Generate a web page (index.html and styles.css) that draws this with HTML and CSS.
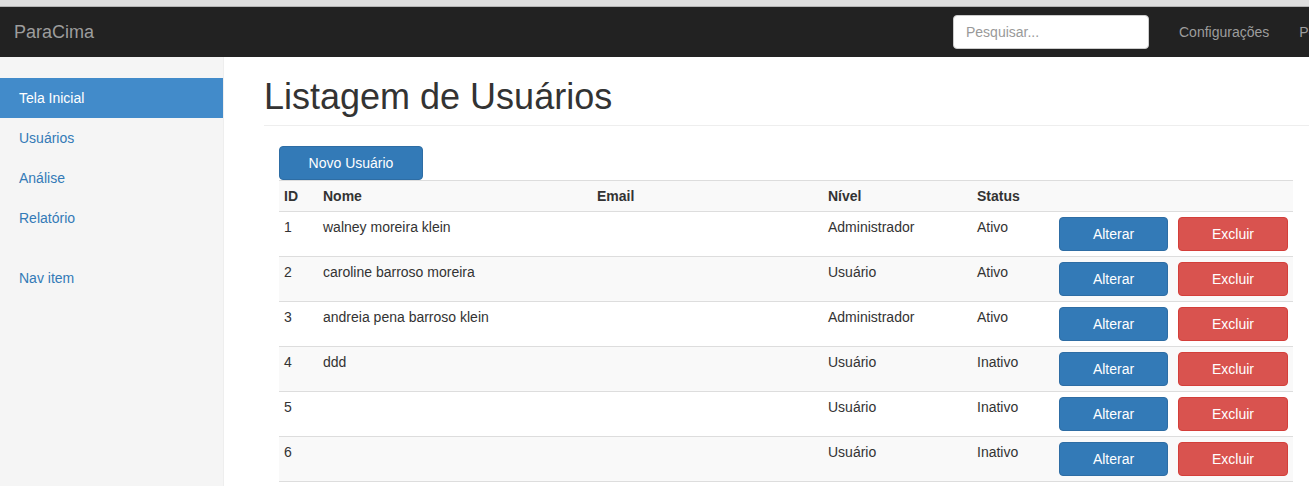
FILE: index.html
```html
<!DOCTYPE html>
<html lang="pt-BR">
<head>
<meta charset="utf-8">
<title>ParaCima - Listagem de Usuários</title>
<link rel="stylesheet" href="styles.css">
</head>
<body>
<div class="topstrip"></div>
<nav class="navbar">
  <a class="brand" href="#">ParaCima</a>
  <div class="nav-right">
    <form class="search-form"><input class="search" type="text" placeholder="Pesquisar..."></form>
    <a class="nav-link" href="#">Configurações</a>
    <a class="nav-link" href="#">Perfil</a>
  </div>
</nav>
<div class="layout">
  <aside class="sidebar">
    <ul class="side-nav">
      <li><a class="active" href="#">Tela Inicial</a></li>
      <li><a href="#">Usuários</a></li>
      <li><a href="#">Análise</a></li>
      <li><a href="#">Relatório</a></li>
    </ul>
    <ul class="side-nav">
      <li><a href="#">Nav item</a></li>
    </ul>
  </aside>
  <main class="main">
    <h1 class="page-header">Listagem de Usuários</h1>
    <div class="table-wrap">
      <button class="btn btn-primary btn-new" type="button">Novo Usuário</button>
      <table class="table">
        <colgroup>
          <col class="c-id"><col class="c-nome"><col class="c-email"><col class="c-nivel"><col class="c-status"><col class="c-alt"><col class="c-exc">
        </colgroup>
        <tbody>
          <tr><th>ID</th><th>Nome</th><th>Email</th><th>Nível</th><th>Status</th><th></th><th></th></tr>
          <tr><td>1</td><td>walney moreira klein</td><td></td><td>Administrador</td><td>Ativo</td><td><button class="btn btn-primary btn-alt" type="button">Alterar</button></td><td><button class="btn btn-danger btn-exc" type="button">Excluir</button></td></tr>
          <tr><td>2</td><td>caroline barroso moreira</td><td></td><td>Usuário</td><td>Ativo</td><td><button class="btn btn-primary btn-alt" type="button">Alterar</button></td><td><button class="btn btn-danger btn-exc" type="button">Excluir</button></td></tr>
          <tr><td>3</td><td>andreia pena barroso klein</td><td></td><td>Administrador</td><td>Ativo</td><td><button class="btn btn-primary btn-alt" type="button">Alterar</button></td><td><button class="btn btn-danger btn-exc" type="button">Excluir</button></td></tr>
          <tr><td>4</td><td>ddd</td><td></td><td>Usuário</td><td>Inativo</td><td><button class="btn btn-primary btn-alt" type="button">Alterar</button></td><td><button class="btn btn-danger btn-exc" type="button">Excluir</button></td></tr>
          <tr><td>5</td><td></td><td></td><td>Usuário</td><td>Inativo</td><td><button class="btn btn-primary btn-alt" type="button">Alterar</button></td><td><button class="btn btn-danger btn-exc" type="button">Excluir</button></td></tr>
          <tr><td>6</td><td></td><td></td><td>Usuário</td><td>Inativo</td><td><button class="btn btn-primary btn-alt" type="button">Alterar</button></td><td><button class="btn btn-danger btn-exc" type="button">Excluir</button></td></tr>
        </tbody>
      </table>
    </div>
  </main>
</div>
</body>
</html>
```
FILE: styles.css
```css
* { box-sizing: border-box; }
html, body {
  margin: 0;
  padding: 0;
  overflow: hidden;
}
body {
  font-family: "Liberation Sans", Arial, Helvetica, sans-serif;
  font-size: 14px;
  line-height: 20px;
  color: #333;
  background: #fff;
}
a { text-decoration: none; }

.topstrip {
  height: 7px;
  background: #dedede;
  border-bottom: 1px solid #b4b4b4;
}

.navbar {
  display: flex;
  height: 50px;
  background: #222;
}
.brand {
  flex: 1 1 auto;
  padding: 15px 15px 15px 14px;
  font-size: 18px;
  line-height: 20px;
  color: #9d9d9d;
}
.nav-right {
  flex: 0 0 356px;
  display: flex;
  white-space: nowrap;
  overflow: hidden;
}
.search-form {
  margin: 0;
  padding: 8px 0;
}
.search {
  display: block;
  width: 196px;
  height: 34px;
  padding: 6px 12px;
  font-family: inherit;
  font-size: 14px;
  line-height: 20px;
  color: #555;
  background: #fff;
  border: 1px solid #ccc;
  border-radius: 4px;
}
.search::placeholder { color: #999; }
.nav-link {
  flex: 0 0 auto;
  padding: 15px;
  color: #9d9d9d;
}
.search-form + .nav-link { margin-left: 15px; }

.layout {
  display: flex;
  min-height: 430px;
}
.sidebar {
  flex: 0 0 224px;
  padding-top: 21px;
  background: #f5f5f5;
  border-right: 1px solid #eee;
}
.side-nav {
  list-style: none;
  margin: 0 0 20px;
  padding: 0;
}
.side-nav a {
  display: block;
  padding: 10px 19px;
  color: #337ab7;
}
.side-nav a.active {
  color: #fff;
  background: #428bca;
}

.main {
  flex: 1 1 auto;
  min-width: 0;
  padding: 20px 0 0 40px;
}
.page-header {
  margin: 0 0 20px;
  padding-bottom: 8px;
  border-bottom: 1px solid #eee;
  font-size: 36px;
  font-weight: 500;
  line-height: 1.1;
  color: #333;
}
.table-wrap {
  margin: 0 16px 0 15px;
}

.btn {
  display: inline-block;
  height: 34px;
  padding: 6px 12px;
  font-family: inherit;
  font-size: 14px;
  line-height: 20px;
  text-align: center;
  color: #fff;
  border: 1px solid transparent;
  border-radius: 4px;
  cursor: pointer;
  vertical-align: top;
}
.btn-primary { background: #337ab7; border-color: #2e6da4; }
.btn-danger { background: #d9534f; border-color: #d43f3a; }
.btn-new { display: block; width: 144px; }
.btn-alt { width: 109px; }
.btn-exc { width: 110px; }

.table {
  width: 100%;
  table-layout: fixed;
  border-collapse: collapse;
  border-spacing: 0;
  border-bottom: 1px solid #ddd;
}
.c-id { width: 39px; }
.c-nome { width: 274px; }
.c-email { width: 231px; }
.c-nivel { width: 149px; }
.c-status { width: 82px; }
.c-alt { width: 119px; }
.c-exc { width: 120px; }
.table th,
.table td {
  padding: 5px;
  text-align: left;
  vertical-align: top;
  border-top: 1px solid #ddd;
  white-space: nowrap;
  overflow: hidden;
}
.table th { font-weight: bold; }
.table tr:nth-child(odd) { background: #f9f9f9; }
```
